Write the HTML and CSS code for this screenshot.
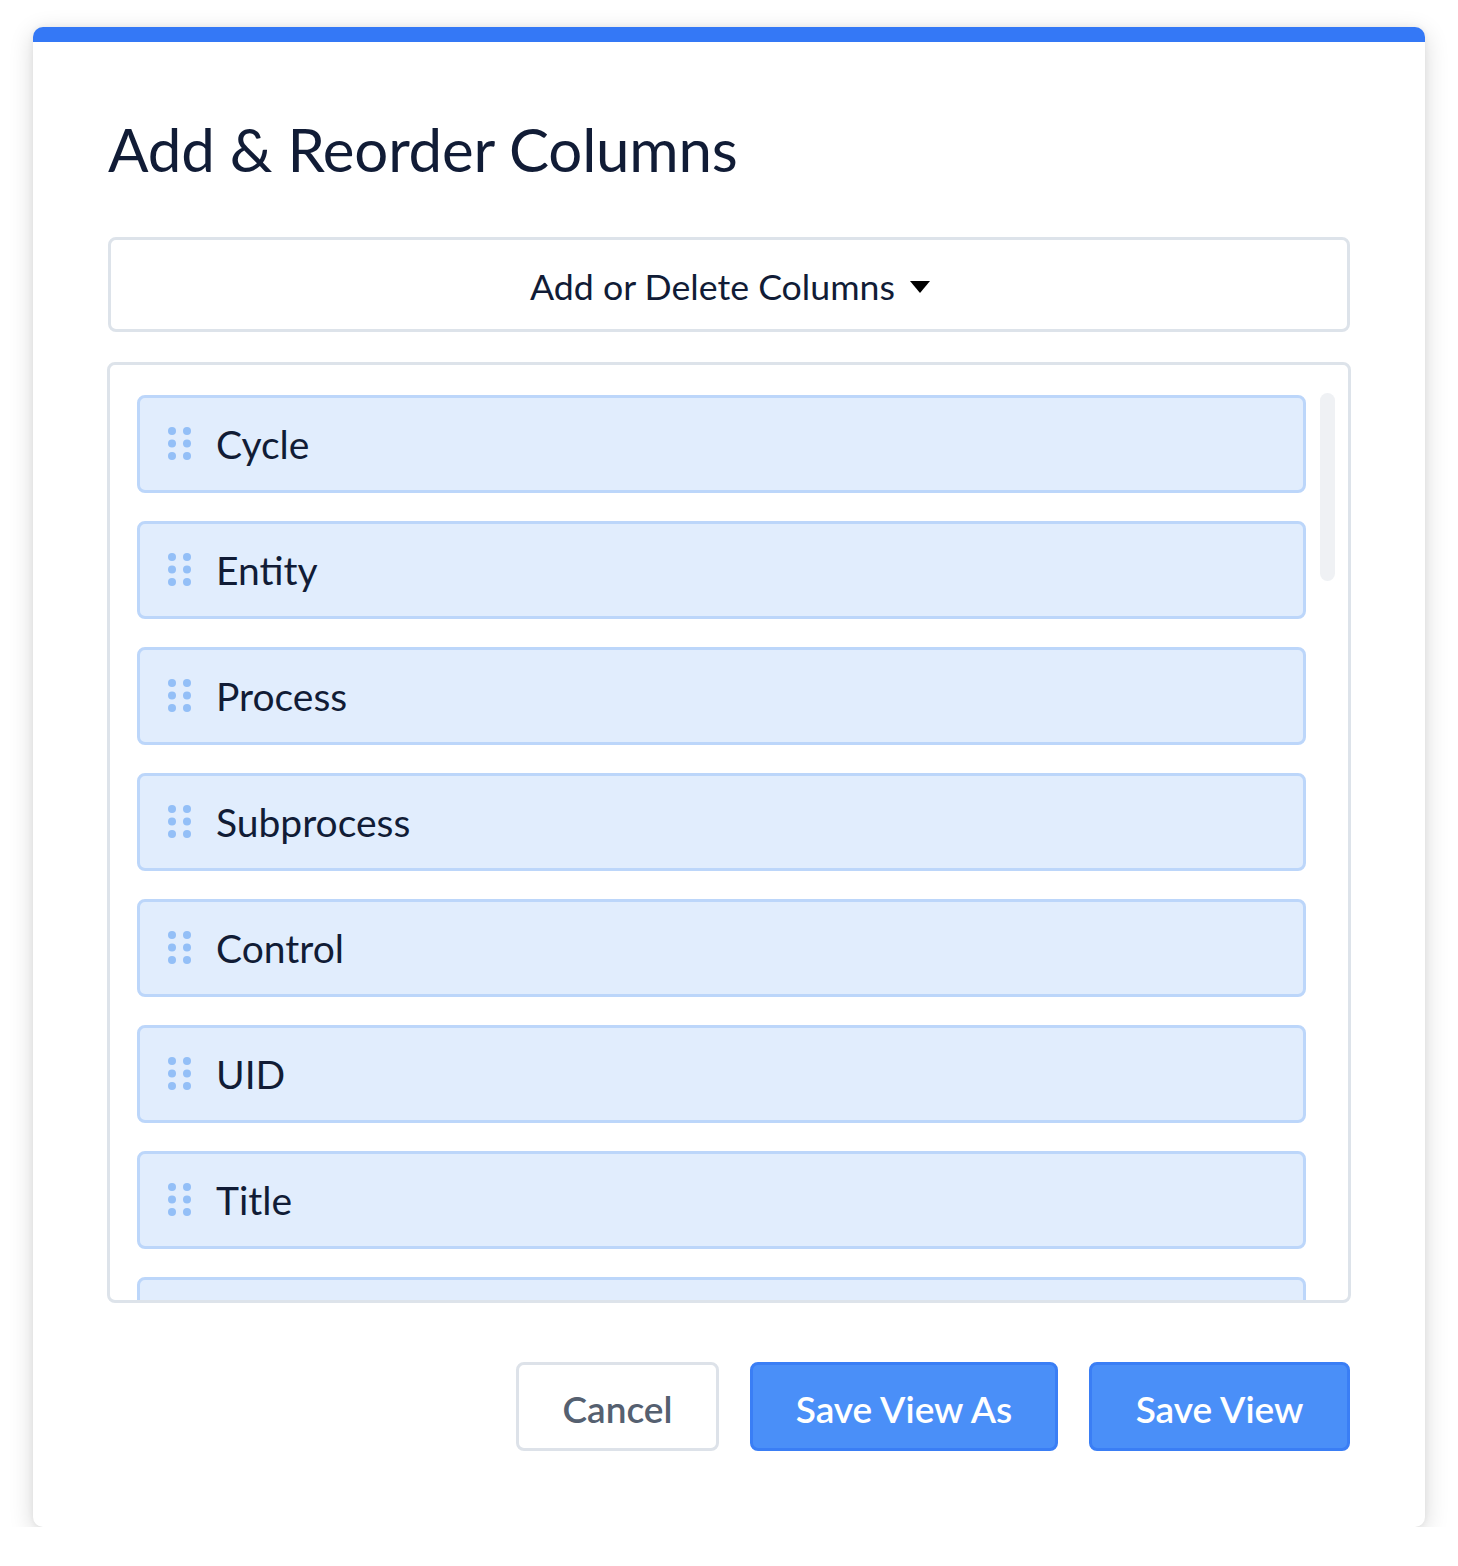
FILE: index.html
```html
<!DOCTYPE html>
<html>
<head>
<meta charset="utf-8">
<link rel="stylesheet" href="styles.css">
</head>
<body>
<div class="modal">
  <h1 class="title">Add &amp; Reorder Columns</h1>
  <button class="dropdown">Add or Delete Columns <span class="caret"></span></button>
  <div class="list">
    <div class="items">
      <div class="item"><svg class="handle" width="24" height="34" viewBox="0 0 24 34"><circle cx="4" cy="4" r="4"/><circle cx="19" cy="4" r="4"/><circle cx="4" cy="16.5" r="4"/><circle cx="19" cy="16.5" r="4"/><circle cx="4" cy="29" r="4"/><circle cx="19" cy="29" r="4"/></svg><span>Cycle</span></div>
      <div class="item"><svg class="handle" width="24" height="34" viewBox="0 0 24 34"><circle cx="4" cy="4" r="4"/><circle cx="19" cy="4" r="4"/><circle cx="4" cy="16.5" r="4"/><circle cx="19" cy="16.5" r="4"/><circle cx="4" cy="29" r="4"/><circle cx="19" cy="29" r="4"/></svg><span>Entity</span></div>
      <div class="item"><svg class="handle" width="24" height="34" viewBox="0 0 24 34"><circle cx="4" cy="4" r="4"/><circle cx="19" cy="4" r="4"/><circle cx="4" cy="16.5" r="4"/><circle cx="19" cy="16.5" r="4"/><circle cx="4" cy="29" r="4"/><circle cx="19" cy="29" r="4"/></svg><span>Process</span></div>
      <div class="item"><svg class="handle" width="24" height="34" viewBox="0 0 24 34"><circle cx="4" cy="4" r="4"/><circle cx="19" cy="4" r="4"/><circle cx="4" cy="16.5" r="4"/><circle cx="19" cy="16.5" r="4"/><circle cx="4" cy="29" r="4"/><circle cx="19" cy="29" r="4"/></svg><span>Subprocess</span></div>
      <div class="item"><svg class="handle" width="24" height="34" viewBox="0 0 24 34"><circle cx="4" cy="4" r="4"/><circle cx="19" cy="4" r="4"/><circle cx="4" cy="16.5" r="4"/><circle cx="19" cy="16.5" r="4"/><circle cx="4" cy="29" r="4"/><circle cx="19" cy="29" r="4"/></svg><span>Control</span></div>
      <div class="item"><svg class="handle" width="24" height="34" viewBox="0 0 24 34"><circle cx="4" cy="4" r="4"/><circle cx="19" cy="4" r="4"/><circle cx="4" cy="16.5" r="4"/><circle cx="19" cy="16.5" r="4"/><circle cx="4" cy="29" r="4"/><circle cx="19" cy="29" r="4"/></svg><span>UID</span></div>
      <div class="item"><svg class="handle" width="24" height="34" viewBox="0 0 24 34"><circle cx="4" cy="4" r="4"/><circle cx="19" cy="4" r="4"/><circle cx="4" cy="16.5" r="4"/><circle cx="19" cy="16.5" r="4"/><circle cx="4" cy="29" r="4"/><circle cx="19" cy="29" r="4"/></svg><span>Title</span></div>
      <div class="item"></div>
    </div>
    <div class="scrollbar"><div class="thumb"></div></div>
  </div>
  <div class="actions">
    <button class="btn btn-cancel">Cancel</button>
    <button class="btn btn-primary btn-saveas">Save View As</button>
    <button class="btn btn-primary btn-save">Save View</button>
  </div>
</div>
</body>
</html>
```
FILE: styles.css
```css
* { box-sizing: border-box; }
html, body { margin: 0; padding: 0; background: #ffffff; }
body {
  font-family: Lato, "Open Sans", "Liberation Sans", sans-serif;
  color: #111c36;
  padding: 27px 33px 0 33px;
}
.modal {
  width: 1392px;
  height: 1500px;
  background: #fff;
  border-top: 15px solid #3478f6;
  border-radius: 10px;
  box-shadow: 0 6px 24px rgba(0,0,0,0.16), 0 0 6px rgba(0,0,0,0.06);
  padding: 71px 75px 0 75px;
}
.title {
  margin: 0;
  font-size: 60px;
  font-weight: 400;
  line-height: 72px;
  letter-spacing: -0.2px;
  color: #111c36;
}
.dropdown {
  display: flex;
  align-items: center;
  justify-content: center;
  gap: 15px;
  width: 100%;
  height: 95px;
  margin-top: 52px;
  background: #fff;
  border: 3px solid #dde3ea;
  border-radius: 8px;
  font-family: inherit;
  font-size: 35.7px;
  color: #111c36;
  padding: 4px 0 0 2px;
}
.caret {
  width: 0; height: 0;
  border-left: 10px solid transparent;
  border-right: 10px solid transparent;
  border-top: 12px solid #000;
  margin-top: 0;
}
.list {
  display: flex;
  gap: 14px;
  margin-top: 30px;
  height: 941px;
  margin-left: -1px;
  margin-right: -1px;
  border: 3px solid #dde3ea;
  border-radius: 8px;
  padding: 30px 13px 0 27px;
  overflow: hidden;
}
.items {
  flex: 1;
  display: flex;
  flex-direction: column;
  gap: 28px;
}
.item {
  flex: none;
  height: 98px;
  display: flex;
  align-items: center;
  gap: 24px;
  padding-left: 28px;
  background: #e1edfd;
  border: 3px solid #bcd6fa;
  border-radius: 8px;
  font-size: 39px;
  color: #111c36;
}
.handle { fill: #93bff7; flex: none; }
.scrollbar { width: 15px; flex: none; }
.thumb {
  margin-top: -2px;
  height: 188px;
  background: #eff1f4;
  border-radius: 8px;
}
.actions {
  display: flex;
  justify-content: flex-end;
  gap: 31px;
  margin-top: 59px;
}
.btn {
  height: 89px;
  border-radius: 8px;
  font-family: inherit;
  font-size: 37px;
  font-weight: 600;
  padding: 4px 0 0 0;
}
.btn-cancel {
  width: 203px;
  background: #fff;
  border: 3px solid #dde2e9;
  color: #556070;
}
.btn-primary {
  background: #4a8ff8;
  border: 3px solid #3a7ef5;
  color: #fff;
}
.btn-saveas { width: 308px; }
.btn-save { width: 261px; }
```
